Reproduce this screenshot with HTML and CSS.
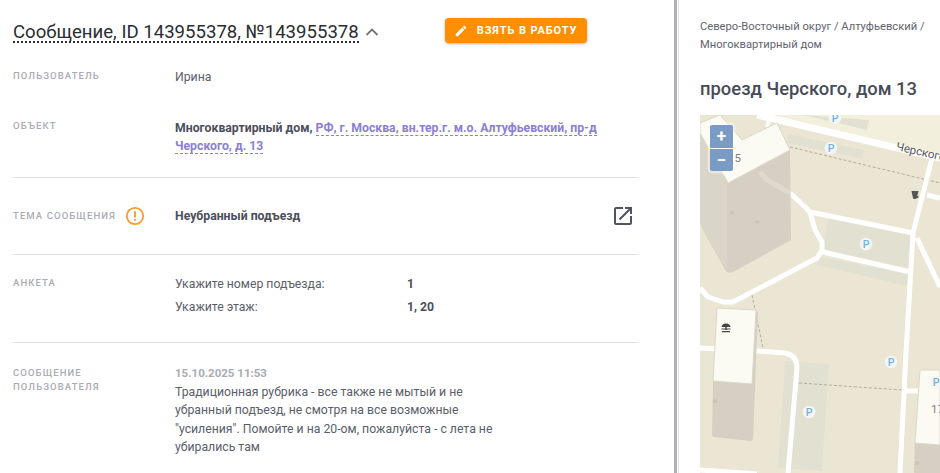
FILE: index.html
```html
<!DOCTYPE html>
<html lang="ru">
<head>
<meta charset="utf-8">
<title>Сообщение</title>
<link rel="stylesheet" href="styles.css">
</head>
<body>
<div class="page">
  <main class="left">
    <header class="head">
      <h1 class="title">Сообщение, ID 143955378, №143955378</h1>
      <svg class="chevron" width="16" height="16" viewBox="0 0 16 16"><path d="M2.5 11 8 5.5 13.5 11" fill="none" stroke="#70747c" stroke-width="1.8"/></svg>
      <button class="take">
        <svg width="14" height="14" viewBox="0 0 24 24"><path fill="#fff" d="M3 17.25V21h3.75L17.81 9.94l-3.75-3.75L3 17.25zM20.71 7.04a1 1 0 0 0 0-1.41l-2.34-2.34a1 1 0 0 0-1.41 0l-1.83 1.83 3.75 3.75 1.83-1.83z"/></svg>
        <span>ВЗЯТЬ В РАБОТУ</span>
      </button>
    </header>

    <section class="block block-top">
      <div class="row row-user">
        <div class="label">Пользователь</div>
        <div class="value">Ирина</div>
      </div>
      <div class="row">
        <div class="label">Объект</div>
        <div class="value addr"><b>Многоквартирный дом,</b> <a class="link">РФ, г. Москва, вн.тер.г. м.о. Алтуфьевский, пр-д Черского, д. 13</a></div>
      </div>
    </section>

    <section class="block block-topic">
      <div class="row row-center">
        <div class="label label-icon">Тема сообщения
          <svg class="warn" width="20" height="20" viewBox="0 0 20 20"><circle cx="10" cy="10" r="8.2" fill="none" stroke="#ff9a2e" stroke-width="1.8"/><path d="M10 5.2v6.2M10 13v1.8" stroke="#ff9a2e" stroke-width="1.9"/></svg>
        </div>
        <div class="value"><b>Неубранный подъезд</b></div>
        <svg class="open" width="24" height="24" viewBox="0 0 24 24"><path fill="#4f5462" d="M19 19H5V5h7V3H5a2 2 0 0 0-2 2v14a2 2 0 0 0 2 2h14a2 2 0 0 0 2-2v-7h-2v7zM14 3v2h3.59l-9.83 9.83 1.41 1.41L19 6.41V10h2V3h-7z"/></svg>
      </div>
    </section>

    <section class="block block-form">
      <div class="row">
        <div class="label">Анкета</div>
        <div class="answers">
          <div class="answer"><span class="q">Укажите номер подъезда:</span><b>1</b></div>
          <div class="answer"><span class="q">Укажите этаж:</span><b>1, 20</b></div>
        </div>
      </div>
    </section>

    <section class="block-msg">
      <div class="row">
        <div class="label label-wrap">Сообщение пользователя</div>
        <div class="message">
          <div class="date">15.10.2025 11:53</div>
          <p class="text">Традиционная рубрика - все также не мытый и не убранный подъезд, не смотря на все возможные "усиления". Помойте и на 20-ом, пожалуйста - с лета не убирались там</p>
        </div>
      </div>
    </section>
  </main>

  <div class="split"></div>

  <aside class="right">
    <div class="crumbs">Северо-Восточный округ / Алтуфьевский / Многоквартирный дом</div>
    <h2 class="addr-title">проезд Черского, дом 13</h2>
    <div class="map">
      <svg class="map-svg" width="240" height="358" viewBox="700 115 240 358">
        <rect x="700" y="115" width="240" height="358" fill="#eae6d3"/>
        <polygon points="757,115 940,115 940,158" fill="#f3efdd"/>
        <g fill="#e2e1d1">
          <polygon points="803,115 869,120 867,130 838,123"/>
          <polygon points="788,134 864,150 863,159 787,143"/>
          <polygon points="828,218 913,233 909,268 823,250"/>
          <polygon points="820,257 908,273 907,286 817,265"/>
          <polygon points="785,361 829,364 822,471 778,468"/>
        </g>
        <g fill="none" stroke="#b3ae9c" stroke-width="1" stroke-dasharray="3 2">
          <path d="M790 147 940 183"/>
          <path d="M752 295 763 348"/>
          <path d="M799 383 902 390"/>
        </g>
        <g fill="none" stroke="#fff" stroke-width="5" stroke-linejoin="round">
          <path d="M757 115 940 158" stroke-width="7"/>
          <path d="M769 121 767 127" stroke-width="4"/>
          <path d="M790 193 803 205 810 212 815 230 822 242V250L817 258 733 302H723L708 297 700 288"/>
          <path d="M810 212 913 233M823 252 910 272"/>
          <path d="M932 158 913 233 906 353 900 473M917 238 940 287M927 195 940 198"/>
          <path d="M700 348 757 351 785 353Q797 355 797 368L788 473"/>
          <path d="M905 391H919M700 470 757 474"/>
        </g>
        <path d="M700 133 728 183 790 150 791 240 733 272Q729 274 726 271L703 230 700 222Z" fill="#d5d0c3"/>
        <path d="M700 133 727 183V270L703 230 700 222Z" fill="#d9d5c8"/>
        <path d="M760 172 767 180 790 193" stroke="#dedacd" stroke-width="5" fill="none"/>
        <path d="M713 381 752 384 756 310 758 312 753 439Q752 441 750 441L714 437Q712 436 712 434Z" fill="#d5d0c3"/>
        <polygon points="915,440 940,440 940,473 914,473" fill="#d5d0c3"/>
        <g fill="#c9c5b8">
          <circle cx="732" cy="213" r="2"/><circle cx="757" cy="222" r="2"/><circle cx="715" cy="401" r="2"/><circle cx="917" cy="463" r="2"/>
        </g>
        <polygon points="700,123 720,115 742,140 777,123 790,150 728,183 700,133" fill="#fbfaf3" stroke="#dcd8c8"/>
        <polygon points="717,308 756,310 752,384 713,381" fill="#fbfaf3" stroke="#dcd8c8"/>
        <polygon points="920,370 940,370 940,445 915,443" fill="#fbfaf3" stroke="#dcd8c8"/>
        <g fill="#f5f5f2">
          <circle cx="835" cy="118" r="6.300"/><circle cx="831" cy="148" r="6.300"/><circle cx="866" cy="244" r="6.300"/><circle cx="891" cy="362" r="6.300"/><circle cx="809" cy="412" r="6.300"/><circle cx="936" cy="382" r="6.300"/>
        </g>
        <g class="pin">
          <text x="835" y="121.800">P</text><text x="831" y="151.800">P</text><text x="866" y="247.800">P</text><text x="891" y="365.800">P</text><text x="809" y="415.800">P</text><text x="936" y="385.800">P</text>
        </g>
        <text class="num" x="728" y="161.500">15</text>
        <text class="num" x="931" y="412.500">17</text>
        <text class="street" transform="translate(895.500 150) rotate(13)">Черского</text>
        <path d="M911.500 191h7l-1.200 5h1v2h-2v1h-3l-.8-3z" fill="#555"/>
        <path d="M726 323.500c-3 0-4.500 2-4.500 3.500h9c0-1.500-1.500-3.500-4.500-3.500zM725.300 327h1.400v3h-1.400zM721.500 328.500h9v1h-9zM722 331h8v1.300h-8z" fill="#444"/>
      </svg>
      <div class="zoom">
        <div class="zoom-btn">+</div>
        <div class="zoom-btn">−</div>
      </div>
    </div>
  </aside>
</div>
</body>
</html>
```
FILE: styles.css
```css
* { box-sizing: border-box; }
html, body { margin: 0; height: 100%; overflow: hidden; background: #fff; }
body { font-family: Roboto, "Noto Sans", sans-serif; font-size: 12.25px; color: #5a5e6a; }
.page { display: flex; height: 473px; overflow: hidden; }

.left { width: 674px; flex: none; padding: 18px 35px 0 13px; }
.head { display: flex; align-items: flex-start; height: 25px; }
.title { margin: 4px 0 0; font-size: 18.6px; line-height: 21px; font-weight: 400; color: #2b2d33; border-bottom: 2px dotted #2b2d33; height: 21px; white-space: nowrap; }
.chevron { margin: 6px 0 0 5px; flex: none; }
.take { display: flex; align-items: center; gap: 9px; margin-left: 65px; width: 142px; height: 25px; padding: 0 0 0 9px; border: 0; border-radius: 4px; background: #ff8f00; color: #fff; font: 700 11px/1 Roboto, sans-serif; letter-spacing: 0.9px; box-shadow: 0 1px 3px rgba(0,0,0,.3); }

.block { border-bottom: 1px solid #e0e0e0; }
.block-top { margin-top: 23px; height: 112px; padding-top: 0; }
.row { display: flex; align-items: flex-start; }
.row-user { height: 52px; padding-top: 2px; }
.label { width: 162px; flex: none; font-size: 9.5px; line-height: 14px; font-weight: 500; letter-spacing: 1.1px; text-transform: uppercase; color: #aaabb3; padding-top: 1px; }
.value { line-height: 18px; }
.addr { width: 440px; margin-top: 1px; }
.value b, .answer b { font-weight: 700; color: #4b4f5c; }
.link { font-weight: 700; color: #8a7fd1; text-decoration: none; border-bottom: 1px dashed #8a7fd1; }

.block-topic { height: 77px; padding-top: 27px; }
.row-center { align-items: center; height: 22px; }
.label-icon { display: flex; align-items: center; gap: 9px; padding: 0; }
.warn { flex: none; }
.open { margin-left: auto; margin-right: 4px; flex: none; }

.block-form { height: 88px; padding-top: 20px; }
.answers { display: flex; flex-direction: column; gap: 5px; padding-top: 0; }
.answer { display: flex; line-height: 18px; }
.q { width: 232px; flex: none; }

.block-msg { padding-top: 21px; }
.label-wrap { padding: 2px 90px 0 0; width: 162px; }
.date { font-size: 11.500px; font-weight: 700; color: #aaabb3; line-height: 18px; }
.text { margin: 0.5px 0 0; width: 330px; line-height: 18.500px; }

.split { width: 5px; flex: none; border-left: 3px solid #b0b0b8; border-right: 1px solid #e2e2e6; }
.right { flex: 1; min-width: 0; padding: 18px 0 0 21px; }
.crumbs { font-size: 11.200px; line-height: 18px; width: 240px; color: #5f636e; }
.addr-title { margin: 23px 0 0; font-size: 18.400px; line-height: 24px; font-weight: 500; color: #474b58; white-space: nowrap; }
.map { position: relative; margin-top: 14px; width: 240px; height: 358px; overflow: hidden; }
.map-svg { display: block; }
.pin text { font: 500 10.500px Roboto, sans-serif; fill: #6db3ea; text-anchor: middle; }
.num { font: 400 11.500px Roboto, sans-serif; fill: #808080; }
.street { font: 400 11.500px Roboto, sans-serif; fill: #555; }
.zoom { position: absolute; left: 10px; top: 10px; width: 23px; background: #7a9bc4; border-radius: 2px; box-shadow: 0 0 0 2.500px rgba(255,255,255,.4); }
.zoom-btn { height: 23px; display: flex; align-items: center; justify-content: center; color: #fff; font: 700 17px/1 Roboto, sans-serif; }
.zoom-btn + .zoom-btn { border-top: 1px solid #fff; }
```
